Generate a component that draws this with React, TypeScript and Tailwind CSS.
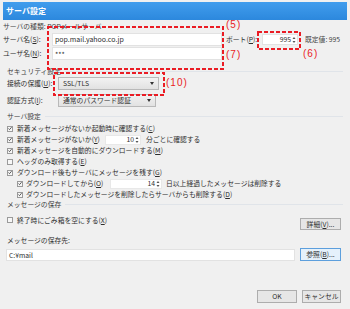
import { ReactNode } from "react";

function Check({ on }: { on?: boolean }) {
  return (
    <span className="flex h-[6px] w-[6px] shrink-0 items-center justify-center border border-[#9a9a9a] bg-[#f7f7f7]">
      {on && (
        <svg width="5" height="5" viewBox="0 0 5 5">
          <path d="M0.6 2.6 L1.9 3.9 L4.4 0.9" stroke="#2b2b2b" strokeWidth="1" fill="none" />
        </svg>
      )}
    </span>
  );
}

function Spin() {
  return (
    <svg width="4" height="8" viewBox="0 0 4 8" className="shrink-0">
      <path d="M0.5 3 L2 1 L3.5 3 Z" fill="#555" />
      <path d="M0.5 5 L2 7 L3.5 5 Z" fill="#555" />
    </svg>
  );
}

function Row({ on, sub, children }: { on?: boolean; sub?: boolean; children: ReactNode }) {
  return (
    <div className={sub ? "flex h-[11px] items-center gap-[3px] pl-[17px]" : "flex h-[11px] items-center gap-[4px] pl-[7px]"}>
      <Check on={on} />
      {children}
    </div>
  );
}

function Header({ children }: { children: ReactNode }) {
  return (
    <div className="flex h-full items-center pl-[7px] pr-[7px] text-[#3c3c3c]">
      <span>{children}</span>
      <span className="ml-[4px] h-px flex-1 bg-[#e0e4e9]" />
    </div>
  );
}

function Select({ width, children }: { width: string; children: ReactNode }) {
  return (
    <div className={`${width} flex h-[13px] items-center justify-between border border-[#b9b9b9] bg-linear-to-b from-[#f2f2f2] to-[#e2e2e2] pl-[4px] pr-[4px]`}>
      <span>{children}</span>
      <svg width="4" height="3" viewBox="0 0 4 3">
        <path d="M0 0 L4 0 L2 3 Z" fill="#333" />
      </svg>
    </div>
  );
}

function Btn({ children, focus }: { children: ReactNode; focus?: boolean }) {
  return (
    <div
      className={
        focus
          ? "flex h-[13px] w-[41px] items-center justify-center border border-[#5d9fdd] bg-[#e5f1fb]"
          : "flex h-[12px] w-[41px] items-center justify-center border border-[#adadad] bg-[#e6e6e6]"
      }
    >
      {children}
    </div>
  );
}

function Dash({ pos, w, h }: { pos: string; w: number; h: number }) {
  return (
    <svg width={w} height={h} className={`absolute ${pos}`}>
      <rect x="1" y="1" width={w - 2} height={h - 2} fill="none" stroke="#ea1c24" strokeWidth="2" strokeDasharray="4 2" />
    </svg>
  );
}

export default function App() {
  return (
    <div className="relative h-[309px] w-[350px] overflow-hidden bg-[#f0f0f0] font-['Noto_Sans_CJK_JP',sans-serif] text-[6.8px] leading-none text-[#2e2e2e]">
      <div className="mx-[3px] mt-[2px] flex h-[18px] items-center bg-linear-to-b from-[#419ded] to-[#2c88dd] px-[3px] text-[8px] font-bold text-white">
        サーバ設定
      </div>

      <div className="flex h-[13px] items-center pl-[3px] text-[#444]">サーバの種類: POPメールサーバ</div>
      <div className="flex h-[14px] items-start">
        <span className="flex h-[13px] w-[52px] items-center pl-[3px]">
          サーバ名(<u>S</u>):
        </span>
        <div className="flex h-[13px] w-[170px] items-center border border-[#e2e2e2] bg-white pl-[2px] text-[7px]">
          pop.mail.yahoo.co.jp
        </div>
        <span className="ml-[4px] flex h-[13px] w-[36px] items-center">
          ポート(<u>P</u>):
        </span>
        <div className="mt-[1px] flex h-[11px] w-[36px] items-center justify-end gap-[1px] border border-[#e2e2e2] bg-white pr-[1px]">
          995
          <Spin />
        </div>
        <span className="ml-[7px] flex h-[13px] items-center text-[#444]">既定値: 995</span>
      </div>
      <div className="flex h-[14px] items-start">
        <span className="flex h-[13px] w-[52px] items-center pl-[3px]">
          ユーザ名(<u>N</u>):
        </span>
        <div className="flex h-[13px] w-[170px] items-center border border-[#e2e2e2] bg-white pl-[2px] pt-[2px] text-[7px]">
          ***
        </div>
      </div>

      <div className="mt-[4px] h-[12px]">
        <Header>セキュリティ設定</Header>
      </div>
      <div className="flex h-[13px] items-center pl-[7px]">
        <span className="w-[51px]">
          接続の保護(<u>U</u>):
        </span>
        <Select width="w-[101px]">SSL/TLS</Select>
      </div>
      <div className="mt-[4px] flex h-[13px] items-center pl-[7px]">
        <span className="w-[51px]">
          認証方式(<u>I</u>):
        </span>
        <Select width="w-[98px]">通常のパスワード認証</Select>
      </div>

      <div className="mt-[3px] h-[13px]">
        <Header>サーバ設定</Header>
      </div>
      <Row on>
        <span>
          新着メッセージがないか起動時に確認する(<u>C</u>)
        </span>
      </Row>
      <Row on>
        <span className="w-[84px]">
          新着メッセージがないか(<u>Y</u>)
        </span>
        <div className="flex h-[10px] w-[36px] items-center justify-end gap-[1px] border border-[#e8e8e8] bg-white pr-[1px]">
          10
          <Spin />
        </div>
        <span className="ml-[1px]">分ごとに確認する</span>
      </Row>
      <Row on>
        <span>
          新着メッセージを自動的にダウンロードする(<u>M</u>)
        </span>
      </Row>
      <Row>
        <span>
          ヘッダのみ取得する(<u>E</u>)
        </span>
      </Row>
      <Row on>
        <span>
          ダウンロード後もサーバにメッセージを残す(<u>G</u>)
        </span>
      </Row>
      <Row on sub>
        <span className="w-[81px]">
          ダウンロードしてから(<u>O</u>)
        </span>
        <div className="flex h-[10px] w-[52px] items-center justify-end gap-[1px] border border-[#e8e8e8] bg-white pr-[1px]">
          14
          <Spin />
        </div>
        <span className="ml-[1px]">日以上経過したメッセージは削除する</span>
      </Row>
      <Row on sub>
        <span>
          ダウンロードしたメッセージを削除したらサーバからも削除する(<u>D</u>)
        </span>
      </Row>

      <div className="h-[9px]">
        <Header>メッセージの保存</Header>
      </div>
      <div className="mt-[5px] flex h-[16px] items-start justify-between pr-[9px]">
        <div className="flex h-[12px] items-center gap-[4px] pl-[7px]">
          <Check />
          <span>
            終了時にごみ箱を空にする(<u>X</u>)
          </span>
        </div>
        <div className="mt-[4px]">
          <Btn>
            詳細(<u>V</u>)...
          </Btn>
        </div>
      </div>
      <div className="mt-[4px] flex h-[12px] items-center pl-[7px]">メッセージの保存先:</div>
      <div className="mt-[2px] flex h-[13px] items-start gap-[5px] pl-[6px] pr-[9px]">
        <div className="mt-[1px] flex h-[12px] flex-1 items-center border border-[#e2e2e2] bg-white pl-[2px]">C:¥mail</div>
        <Btn focus>
          参照(<u>B</u>)...
        </Btn>
      </div>
      <div className="mt-[29px] flex h-[13px] justify-end gap-[5px] pr-[9px]">
        <div className="flex h-[13px] w-[40px] items-center justify-center border border-[#adadad] bg-[#e6e6e6]">OK</div>
        <div className="flex h-[13px] w-[39px] items-center justify-center border border-[#adadad] bg-[#e6e6e6]">キャンセル</div>
      </div>

      <Dash pos="left-[47px] top-[26px]" w={177} h={44} />
      <Dash pos="left-[257px] top-[31px]" w={44} h={19} />
      <Dash pos="left-[53px] top-[72px]" w={112} h={24} />
      <span className="absolute left-[226px] top-[20px] font-['Liberation_Sans',sans-serif] text-[10px] tracking-[1px] text-[#ea1c24]">(5)</span>
      <span className="absolute left-[226px] top-[50px] font-['Liberation_Sans',sans-serif] text-[10px] tracking-[1px] text-[#ea1c24]">(7)</span>
      <span className="absolute left-[303px] top-[49px] font-['Liberation_Sans',sans-serif] text-[10px] tracking-[1px] text-[#ea1c24]">(6)</span>
      <span className="absolute left-[166px] top-[78px] font-['Liberation_Sans',sans-serif] text-[10px] tracking-[1px] text-[#ea1c24]">(10)</span>
    </div>
  );
}
